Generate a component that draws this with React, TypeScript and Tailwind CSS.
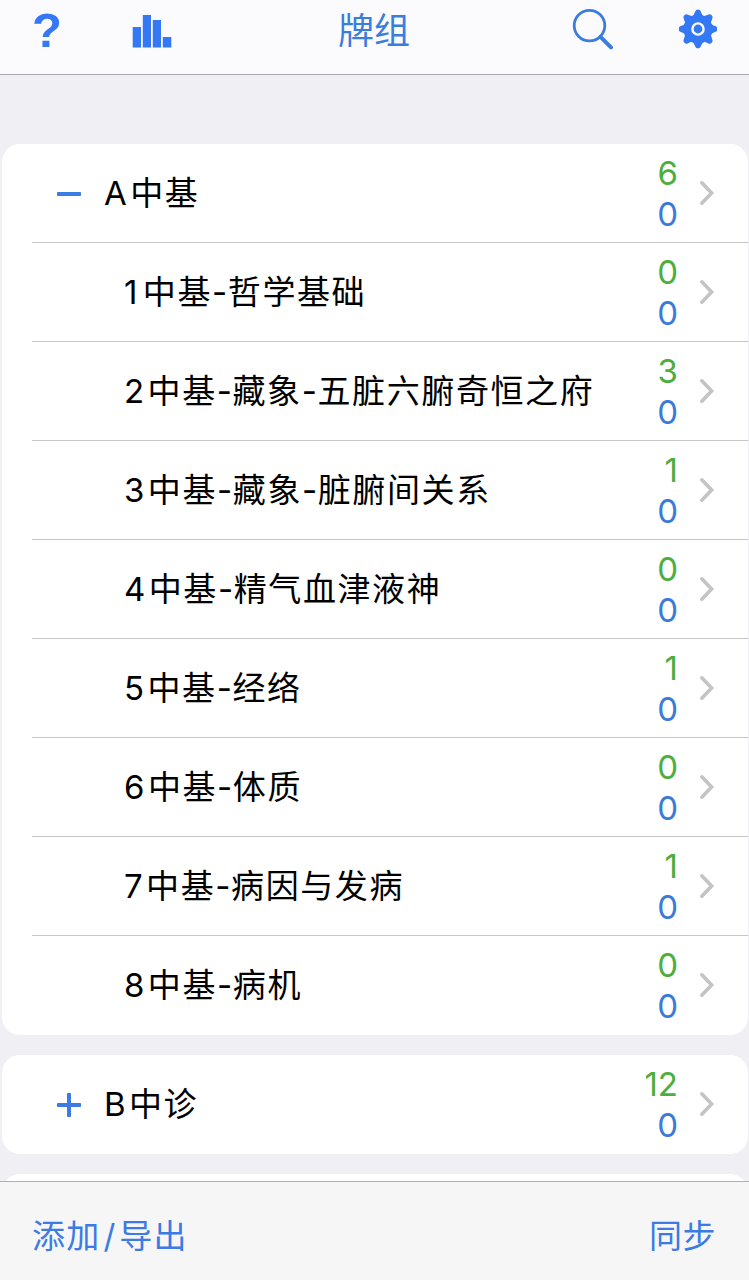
import { useState } from 'react';

type Deck = {
  name: string;
  review: number;
  fresh: number;
  children?: Deck[];
};

const decks: Deck[] = [
  {
    name: 'A中基',
    review: 6,
    fresh: 0,
    children: [
      { name: '1中基-哲学基础', review: 0, fresh: 0 },
      { name: '2中基-藏象-五脏六腑奇恒之府', review: 3, fresh: 0 },
      { name: '3中基-藏象-脏腑间关系', review: 1, fresh: 0 },
      { name: '4中基-精气血津液神', review: 0, fresh: 0 },
      { name: '5中基-经络', review: 1, fresh: 0 },
      { name: '6中基-体质', review: 0, fresh: 0 },
      { name: '7中基-病因与发病', review: 1, fresh: 0 },
      { name: '8中基-病机', review: 0, fresh: 0 },
    ],
  },
  { name: 'B中诊', review: 12, fresh: 0 },
];

const StatsIcon = () => (
  <svg width="40" height="34" viewBox="0 0 40 34" fill="#3478f6">
    <rect x="0.7" y="13" width="8.3" height="20.5" />
    <rect x="10.8" y="1" width="8.2" height="32.5" />
    <rect x="20.8" y="6" width="8.2" height="27.5" />
    <rect x="30.8" y="23" width="8.5" height="10.5" />
  </svg>
);

const SearchIcon = () => (
  <svg width="42" height="42" viewBox="0 0 42 42" fill="none" stroke="#3b7ddd" strokeLinecap="round">
    <circle cx="17.5" cy="17.6" r="15.3" strokeWidth="2.8" />
    <path d="M28.5 28.8L39 39.4" strokeWidth="4" />
  </svg>
);

const GearIcon = () => (
  <svg width="38" height="40" viewBox="-19 -20 38 40" fill="#3478f6">
    <circle r="14.3" />
    {[0, 45, 90, 135, 180, 225, 270, 315].map((deg) => (
      <path
        key={deg}
        transform={`rotate(${deg})`}
        d="M-6.2 -12.5Q-3.8 -14 -3 -17Q-2.4 -19.4 0 -19.4Q2.4 -19.4 3 -17Q3.8 -14 6.2 -12.5Z"
      />
    ))}
    <circle r="5.6" stroke="#fbfbfd" strokeWidth="2.4" />
  </svg>
);

const Chevron = () => (
  <svg width="16" height="26" viewBox="0 0 16 26" fill="none" stroke="#c4c4c6" strokeWidth="3.6" strokeLinecap="round" strokeLinejoin="miter">
    <path d="M2.8 2.8L12.6 13L2.8 23.2" />
  </svg>
);

const ToggleIcon = ({ open }: { open: boolean }) => (
  <svg width="24" height="24" viewBox="0 0 24 24" fill="#3b7be3">
    <rect x="0" y="10" width="24" height="4" rx="0.8" />
    {!open && <rect x="10" y="0" width="4" height="24" rx="0.8" />}
  </svg>
);

// the leading letter or digit gets a little extra room before the Chinese text
const DeckName = ({ name }: { name: string }) => (
  <>
    <span className={name[0] === '1' ? 'tracking-[5.4px]' : 'tracking-[3.4px]'}>{name[0]}</span>
    {name.slice(1).split(/(-)/).map((part, i) =>
      part === '-' ? <span key={i} className="tracking-[0.6px]">-</span> : part
    )}
  </>
);

const DeckRow = ({ deck, child, open, onToggle }: {
  deck: Deck;
  child?: boolean;
  open?: boolean;
  onToggle?: () => void;
}) => (
  <div className="flex h-[99px] items-center pb-px pl-[30px] pr-[33px]">
    {!child && (
      <button onClick={onToggle} className="ml-[25px] mr-[23px] mt-px">
        <ToggleIcon open={!!open} />
      </button>
    )}
    <p className={`flex-1 whitespace-nowrap text-[33px] leading-[48px] tracking-[1.6px] text-black ${child ? 'pl-[92px]' : ''}`}>
      <DeckName name={deck.name} />
    </p>
    <div className="mr-[21px] mt-px flex flex-col text-right text-[33px] leading-[41px]">
      <span className="text-[#4cae3c]">{deck.review}</span>
      <span className="text-[#3b7bd8]">{deck.fresh}</span>
    </div>
    <Chevron />
  </div>
);

const App = () => {
  const [openDecks, setOpenDecks] = useState<string[]>(['A中基']);

  const toggle = (name: string) => {
    setOpenDecks((prev) =>
      prev.includes(name) ? prev.filter((n) => n !== name) : [...prev, name]
    );
  };

  return (
    <div className="flex h-[1280px] w-[749px] flex-col overflow-hidden bg-[#efeff4] font-['Inter','Noto_Sans_CJK_SC',sans-serif]">
      <header className="flex h-[75px] shrink-0 items-start border-b border-[#a9a9ac] bg-[#fbfbfd]">
        <button className="ml-[32px] w-[30px] font-['Liberation_Sans',sans-serif] text-[49px] font-bold leading-[60px] text-[#3478f6]">
          ?
        </button>
        <button className="ml-[70px] mt-[14px]"><StatsIcon /></button>
        <h1 className="ml-[166px] w-[72px] whitespace-nowrap text-[36px] leading-[63px] text-[#3b7ddd]">牌组</h1>
        <button className="ml-[162px] mt-[8px]"><SearchIcon /></button>
        <button className="ml-[65px] mt-[9px]"><GearIcon /></button>
      </header>

      <main className="flex min-h-0 flex-1 flex-col gap-[20px] overflow-hidden pl-[2px] pr-px pt-[69px]">
        {decks.map((deck) => {
          const open = openDecks.includes(deck.name);

          return (
            <section key={deck.name} className="shrink-0 overflow-hidden rounded-[18px] bg-white">
              <DeckRow deck={deck} open={open} onToggle={() => toggle(deck.name)} />
              {open && deck.children?.map((c) => (
                <div key={c.name} className="relative">
                  <div className="absolute -top-px left-[30px] right-0 h-px bg-[#c6c6c8]" />
                  <DeckRow deck={c} child />
                </div>
              ))}
            </section>
          );
        })}
        {/* next deck, mostly hidden behind the toolbar */}
        <section className="h-[99px] shrink-0 rounded-[18px] bg-white" />
      </main>

      <footer className="flex h-[99px] shrink-0 items-center justify-between border-t border-[#b0b0b3] bg-[#f6f6f7] pl-[32px] pr-[33px] pt-[12px] text-[33px] text-[#3b7be3]">
        <button className="tracking-[1.2px]">
          添加<span className="ml-[3px] tracking-[4px]">/</span>导出
        </button>
        <button className="tracking-[0.5px]">同步</button>
      </footer>
    </div>
  );
};

export default App;
